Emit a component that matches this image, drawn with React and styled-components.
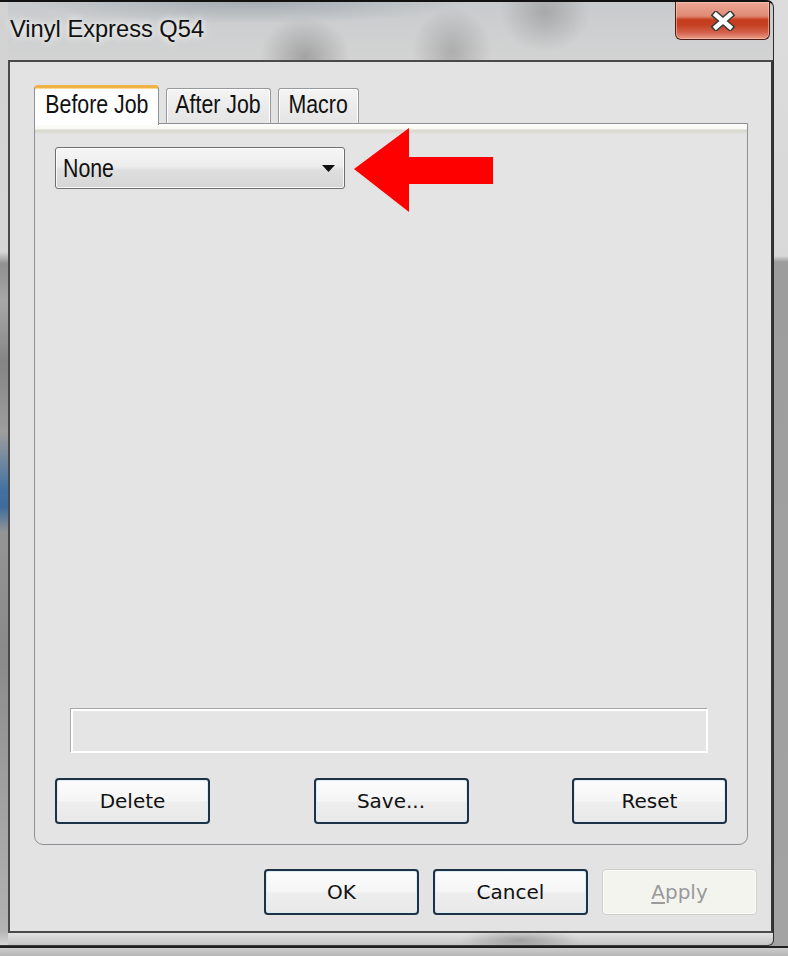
import React from 'react';
import styled, { createGlobalStyle, css } from 'styled-components';

const GlobalStyle = createGlobalStyle`
  html, body { margin: 0; padding: 0; }
  body { background: #a0a0a0; font-family: "Liberation Sans", Arial, sans-serif; }
  * { box-sizing: border-box; }
`;

const Screen = styled.div`
  width: 788px;
  height: 956px;
  overflow: hidden;
  background:
    linear-gradient(#202020, #202020) 0 946px / 100% 2px no-repeat,
    linear-gradient(#cdcdcd, #b6b6b6) 0 948px / 100% 8px no-repeat,
    linear-gradient(to bottom, #dcdcdc 0, #d8d8d8 256px, #9d9d9d 262px, #a3a3a3 100%);
`;

const Window = styled.div`
  width: 774px;
  height: 946px;
  display: flex;
  flex-direction: column;
  border-top: 2px solid #121212;
  border-right: 1px solid #2c2c2c;
  border-bottom: 1px solid #3a3a3a;
  border-radius: 0 7px 6px 0;
  background:
    linear-gradient(to bottom, #d2d2d2 0, #d6d6d6 250px, #909090 262px, #a8a8a8 300px, #858585 360px, #9e9e9e 430px, #4472a0 488px, #3d6c9c 505px, #959595 530px, #8a8a8a 650px, #a2a2a2 800px, #b2b2b2 928px, #d6d6d6 100%) 0 0 / 8px 100% no-repeat,
    radial-gradient(ellipse 45px 40px at 305px 55px, rgba(85, 85, 85, 0.38), rgba(85, 85, 85, 0)),
    radial-gradient(ellipse 40px 45px at 452px 50px, rgba(95, 95, 95, 0.32), rgba(95, 95, 95, 0)),
    radial-gradient(ellipse 45px 40px at 545px 10px, rgba(100, 100, 100, 0.35), rgba(100, 100, 100, 0)),
    radial-gradient(ellipse 220px 22px at 250px 0px, rgba(110, 125, 140, 0.4), rgba(110, 125, 140, 0)),
    radial-gradient(ellipse 60px 12px at 520px 938px, rgba(90, 90, 90, 0.4), rgba(90, 90, 90, 0)),
    linear-gradient(to bottom, #c8cbcd 0, #d3d3d3 58px, #cfcfcf 928px, #e2e2e2 931px, #c4c4c4 100%);
`;

const TitleBar = styled.div`
  flex: none;
  height: 58px;
  display: flex;
  align-items: flex-start;
  justify-content: space-between;
  padding: 0 3px 0 10px;
`;

const TitleText = styled.div`
  margin-top: 13px;
  font-size: 24px;
  line-height: 28px;
  color: #111;
  white-space: nowrap;
  transform: scaleX(0.985);
  transform-origin: left center;
  text-shadow: 0 0 6px rgba(255, 255, 255, 0.95), 0 0 12px rgba(255, 255, 255, 0.7);
`;

const CloseButton = styled.div`
  width: 95px;
  height: 38px;
  display: flex;
  align-items: center;
  justify-content: center;
  border: 1px solid #4a1e14;
  border-top: none;
  border-radius: 0 0 6px 6px;
  background: linear-gradient(
    to bottom,
    #eba795 0%,
    #e08a74 38%,
    #c63c1f 48%,
    #c4401f 62%,
    #d3604a 82%,
    #e99d8a 100%
  );
  box-shadow: inset 0 0 0 1px rgba(255, 205, 190, 0.55);
`;

const Client = styled.div`
  flex: none;
  margin-left: 8px;
  height: 873px;
  border: 2px solid #4a4a4a;
  border-right-color: #363636;
  background: #e3e3e3;
  display: flex;
  flex-direction: column;
  padding: 23px 0 16px 0;
`;

const TabControl = styled.div`
  margin: 0 23px 0 24px;
  display: flex;
  flex-direction: column;
`;

const TabStrip = styled.div`
  position: relative;
  z-index: 1;
  height: 38px;
  display: flex;
  align-items: flex-end;
`;

const Tab = styled.div`
  display: flex;
  justify-content: center;
  align-items: flex-start;
  width: ${(p) => p.$w}px;
  margin-left: ${(p) => p.$ml || 0}px;
  color: #111;
  ${(p) =>
    p.$active
      ? css`
          height: 40px;
          margin-bottom: -2px;
          border: 1px solid #8f9297;
          border-bottom: none;
          border-top: 3px solid #f0b246;
          border-radius: 4px 4px 0 0;
          background: #ffffff;
          padding-top: 3px;
          box-shadow: inset 0 1px 0 #fbd991;
        `
      : css`
          height: 35px;
          border: 1px solid #97999d;
          border-bottom: none;
          border-radius: 3px 3px 0 0;
          background: linear-gradient(to bottom, #f4f4f4, #e4e4e4);
          box-shadow: inset 1px 1px 0 #ffffff, inset -1px 0 0 #ffffff;
          padding-top: 2px;
        `}
`;

const Label = styled.span`
  display: inline-block;
  font-family: "Liberation Sans", Arial, sans-serif;
  font-size: 26px;
  line-height: 26px;
  white-space: nowrap;
  transform: scaleX(0.82);
  transform-origin: ${(p) => p.$origin || 'center'};
`;

const Panel = styled.div`
  position: relative;
  height: 722px;
  border: 1px solid #8d9095;
  border-radius: 0 0 9px 9px;
  background: linear-gradient(
    to bottom,
    #fcfcfa 0,
    #f8f8f3 5px,
    #d9d9d0 6px,
    #dadad2 8px,
    #e4e4e4 10px,
    #e4e4e4 100%
  );
  display: flex;
  flex-direction: column;
  padding: 23px 20px 20px 20px;
`;

const Combo = styled.div`
  width: 290px;
  height: 42px;
  flex: none;
  display: flex;
  align-items: center;
  justify-content: space-between;
  padding: 0 9px 0 7px;
  border: 1px solid #6f6f6f;
  border-radius: 3px;
  background: linear-gradient(to bottom, #f6f6f6 0%, #ededed 45%, #dfdfdf 55%, #d6d6d6 100%);
  box-shadow: inset 0 0 0 1px rgba(255, 255, 255, 0.8);
  color: #111;
`;

const ArrowMark = styled.svg`
  position: absolute;
  left: 319px;
  top: 4px;
  width: 140px;
  height: 85px;
`;

const Spacer = styled.div`
  flex: 1;
`;

const StatusBox = styled.div`
  flex: none;
  height: 44px;
  margin: 0 19px 0 16px;
  border: 2px solid #ffffff;
  background: #e5e5e5;
  box-shadow: -1px -1px 0 #a9a9a9;
`;

const ButtonRow = styled.div`
  flex: none;
  margin-top: 25px;
  display: flex;
  justify-content: space-between;
`;

const Footer = styled.div`
  flex: none;
  margin-top: 24px;
  padding-right: 14px;
  display: flex;
  justify-content: flex-end;
  gap: 14px;
`;

const Button = styled.div`
  width: 155px;
  height: 46px;
  display: flex;
  align-items: center;
  justify-content: center;
  font-family: "DejaVu Sans", Verdana, sans-serif;
  font-size: 20px;
  line-height: 24px;
  color: #111;
  border: 2px solid #1d3244;
  border-radius: 4px;
  background: linear-gradient(to bottom, #fcfcfc 0%, #f5f5f5 50%, #eeeeee 52%, #e8e8e8 100%);
  box-shadow: inset 0 0 0 1px #dcebf5;
  ${(p) =>
    p.$disabled &&
    css`
      border: 1px solid #cfcfca;
      color: #9a9a9a;
      background: #f4f4ef;
      box-shadow: inset 0 0 0 1px #fbfbf8;
    `}
`;

const Mnemonic = styled.span`
  text-decoration: underline;
  text-underline-offset: 3px;
`;

function CloseGlyph() {
  return (
    <svg width="24" height="20" viewBox="0 0 24 20">
      <path d="M5 4 L19 16 M19 4 L5 16" stroke="#3b3b3b" strokeWidth="7.5" strokeLinecap="square" fill="none" />
      <path d="M5 4 L19 16 M19 4 L5 16" stroke="#ffffff" strokeWidth="4.5" strokeLinecap="square" fill="none" />
    </svg>
  );
}

function DropGlyph() {
  return (
    <svg width="13" height="7" viewBox="0 0 13 7">
      <polygon points="0,0 13,0 6.5,7" fill="#111" />
    </svg>
  );
}

export default function App() {
  return (
    <>
      <GlobalStyle />
      <Screen>
        <Window>
          <TitleBar>
            <TitleText>Vinyl Express Q54</TitleText>
            <CloseButton>
              <CloseGlyph />
            </CloseButton>
          </TitleBar>
          <Client>
            <TabControl>
              <TabStrip>
                <Tab $active $w={125}>
                  <Label>Before Job</Label>
                </Tab>
                <Tab $w={105} $ml={7}>
                  <Label>After Job</Label>
                </Tab>
                <Tab $w={81} $ml={7}>
                  <Label>Macro</Label>
                </Tab>
              </TabStrip>
              <Panel>
                <Combo>
                  <Label $origin="left center">None</Label>
                  <DropGlyph />
                </Combo>
                <ArrowMark viewBox="0 0 140 85">
                  <polygon points="0,41 55,0 55,29 139,29 139,56 55,56 55,84" fill="#ff0000" />
                </ArrowMark>
                <Spacer />
                <StatusBox />
                <ButtonRow>
                  <Button>Delete</Button>
                  <Button>Save...</Button>
                  <Button>Reset</Button>
                </ButtonRow>
              </Panel>
            </TabControl>
            <Footer>
              <Button>OK</Button>
              <Button>Cancel</Button>
              <Button $disabled>
                <Mnemonic>A</Mnemonic>pply
              </Button>
            </Footer>
          </Client>
        </Window>
      </Screen>
    </>
  );
}
